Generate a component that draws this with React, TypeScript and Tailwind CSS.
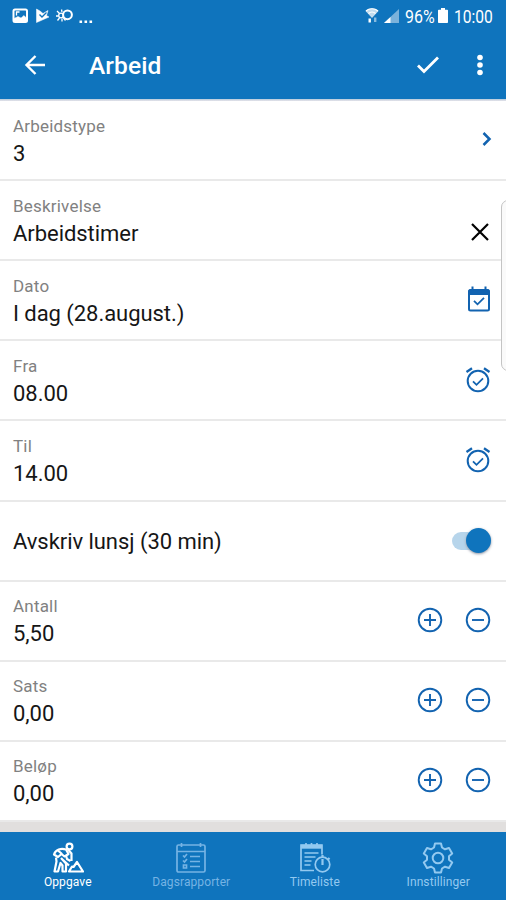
import React from "react";

const StatusBar = () => {
  return (
    <div className="flex h-8 items-center text-white">
      <svg className="ml-[12px] h-8 w-[90px]" viewBox="12 0 90 32" fill="none" stroke="currentColor">
        <rect x={13.5} y={9.5} width={13.5} height={12.5} rx={1.5} strokeWidth={2} />
        <path d="M14 21.5v-3l4-2 3 1.5 3-2.5 3 3v3z" fill="currentColor" strokeWidth={0.5} />
        <path d="M16.5 15.5v-3.5h3" strokeWidth={1.3} />
        <path d="M36.5 9l3.5 2 3 2.5 5-3-1.5 5 2.5 1.5-12.5 5.5z" fill="currentColor" strokeWidth={0.5} />
        <path d="M39.5 14.5l2.5 2.5 4.5-4.5" stroke="#0f74bd" strokeWidth={1.4} />
        <circle cx={67.5} cy={14.8} r={4.4} strokeWidth={2} />
        <circle cx={61} cy={15.5} r={2.3} strokeWidth={1.3} />
        <path d="M57 11l2.5 2.5M56 16h2.5M57.5 20.5l2-2.5M62 21.5v-3M61.5 9.5l.5 2.500M65.500 20.500l-2-2.500" strokeWidth={1.3} />
        <path d="M79.5 21.7h2.6M84.5 21.7h2.6M89.5 21.7h2.6" strokeWidth={2.4} />
      </svg>
      <svg className="ml-auto h-8 w-[38px]" viewBox="363 0 38 32" fill="currentColor">
        <path d="M365.5 11c3.500-3.600 9.500-3.600 13 0l-6.500 7z" opacity={0.75} />
        <path d="M366 11c3.300-3 8.700-3 12 0M368.500 13.500c2-1.800 5-1.800 7 0" fill="none" stroke="currentColor" strokeWidth={1.2} />
        <path d="M368.500 18.500h2.400v4h-2.400z" />
        <path d="M374 17.500h2.400v4.500h-2.400z" opacity={0.5} />
        <path d="M399 9v14h-15z" opacity={0.45} />
        <path d="M390.500 17v6h-6.500z" />
      </svg>
      <span className="ml-[4px] w-[32px] pt-px">
        <span className="inline-block origin-left scale-x-[.84] text-[19px] leading-8">96%</span>
      </span>
      <svg className="h-8 w-[12px]" viewBox="437 0 12 32" fill="currentColor">
        <path d="M441 8h4v1.800h2.200q.8 0 .8.8v11.600q0 .8-.8.800h-8.400q-.8 0-.8-.8v-11.600q0-.8.800-.8h2.200z" />
      </svg>
      <span className="ml-[5px] w-[52px] pt-px">
        <span className="inline-block origin-left scale-x-[.82] text-[19px] leading-8">10:00</span>
      </span>
    </div>
  );
};

const Header = () => {
  return (
    <header className="h-[99px] shrink-0 bg-[#0f74bd] text-white">
      <StatusBar />
      <div className="flex h-[66px] items-center pl-[24px] pr-[22px]">
        <svg className="h-[22px] w-[22px]" viewBox="0 0 22 22" fill="none" stroke="currentColor" strokeWidth={2.4}>
          <path d="M21 11H2.5M11.5 2L2.5 11l9 9" />
        </svg>
        <h1 className="ml-[43px] pt-[2px] text-[24.5px] font-medium tracking-[.1px]">Arbeid</h1>
        <svg className="ml-auto h-[20px] w-[24px]" viewBox="0 0 24 20" fill="none" stroke="currentColor" strokeWidth={2.8}>
          <path d="M2 10.5l6 6L22 2.5" />
        </svg>
        <svg className="ml-[36px] h-[22px] w-[8px]" viewBox="0 0 8 22" fill="currentColor">
          <circle cx={4} cy={3.5} r={2.8} />
          <circle cx={4} cy={11} r={2.8} />
          <circle cx={4} cy={18.5} r={2.8} />
        </svg>
      </div>
    </header>
  );
};

const ChevronIcon = () => (
  <svg className="mr-[1px] mb-[2px] h-[16px] w-[10px]" viewBox="0 0 10 16" fill="none" stroke="currentColor" strokeWidth={2.5}>
    <path d="M1.5 2l6 6-6 6" />
  </svg>
);

const CloseIcon = () => (
  <svg className="mt-[23px] mr-[4px] h-[18px] w-[18px] text-black" viewBox="0 0 18 18" fill="none" stroke="currentColor" strokeWidth={2.2}>
    <path d="M1 1l16 16M17 1L1 17" />
  </svg>
);

const CalendarIcon = () => (
  <svg className="mr-[2px] mb-[2px] h-[26px] w-[24px]" viewBox="0 0 24 26" fill="none" stroke="currentColor">
    <rect x={2} y={4} width={20} height={20.5} rx={1.5} strokeWidth={2} />
    <path d="M2 4h20v4.5H2z" fill="currentColor" strokeWidth={1} />
    <path d="M5.5.5v4M18.5.5v4" strokeWidth={2} />
    <path d="M7 14.8l3.500 3.500 6.500-6.500" strokeWidth={1.8} />
  </svg>
);

const AlarmIcon = () => (
  <svg className="mr-[2px] h-[26px] w-[26px]" viewBox="0 0 26 26" fill="none" stroke="currentColor">
    <circle cx={13} cy={14} r={10.3} strokeWidth={2} />
    <path d="M1.5 5l5.500-3.700M24.500 5l-5.500-3.700" strokeWidth={2.3} />
    <path d="M8 14.300l3.500 3.500 6.500-6.500" strokeWidth={1.8} />
  </svg>
);

const Stepper = () => (
  <div className="mr-[2px] mb-[1px] flex gap-[22px]">
    <svg className="h-[26px] w-[26px]" viewBox="0 0 26 26" fill="none" stroke="currentColor" strokeWidth={1.9}>
      <circle cx={13} cy={13} r={11.3} />
      <path d="M13 7v12M7 13h12" />
    </svg>
    <svg className="h-[26px] w-[26px]" viewBox="0 0 26 26" fill="none" stroke="currentColor" strokeWidth={1.9}>
      <circle cx={13} cy={13} r={11.3} />
      <path d="M7 13h12" />
    </svg>
  </div>
);

const Toggle = () => (
  <div className="mr-[2px] flex h-[18px] w-[39px] items-center justify-end rounded-full bg-gradient-to-r from-[#b7d5eb] from-85% to-transparent to-85%">
    <div className="h-[25px] w-[25px] shrink-0 rounded-full bg-[#0f74bd] shadow-sm shadow-gray-400" />
  </div>
);

type RowProps = {
  label?: string;
  value: string;
  children: React.ReactNode;
};

const Row = ({ label, value, children }: RowProps) => {
  return (
    <div className="flex flex-1 items-center justify-between border-b-2 border-[#e9e9e9] px-[13px] text-[#1263b0]">
      <div className={label ? "pt-[5px]" : "pt-[2px]"}>
        {label && (
          <p className="text-[17px] leading-[21px] tracking-[.2px] text-[#818181]">{label}</p>
        )}
        <p className="text-[22px] leading-[33px] tracking-[-.05px] text-[#161616]">{value}</p>
      </div>
      {children}
    </div>
  );
};

const TaskIcon = () => (
  <svg className="h-[32px] w-[32px]" viewBox="0 0 32 32" fill="none" stroke="currentColor" strokeWidth={2.2} strokeLinejoin="round">
    <circle cx={17.5} cy={4.5} r={2.9} />
    <path d="M14 7.500C9 6 3.500 7.500 2 12.500l4 2.500 3.500-3 3 2.500 4-2.500z" />
    <path d="M6 8.500l4 3.500M16 7.500l3.500 4v7.500M4 15.500l.5 4L2.500 29.500H6l2.500-8.500 2 2.500v6H14v-8l-5-5.500M14 13.500l1 3.500 3.500 2M11 18l6 5.500" />
    <path d="M17 29.500l3-5 1.500.5 3.500-5 6 9.500z" />
  </svg>
);

const ReportIcon = () => (
  <svg className="h-[32px] w-[32px]" viewBox="0 0 32 32" fill="none" stroke="currentColor" strokeWidth={1.7}>
    <rect x={2} y={3} width={28} height={27} rx={1.5} />
    <path d="M2 9.5h28M6.5 1v4M25.5 1v4" />
    <path d="M15 14.5h10M15 19.5h10M15 24.5h10" />
    <path d="M8 13.5l1.500 1.500 2.500-3M8 18.500l1.500 1.500 2.500-3M8.500 23h3v3h-3z" />
  </svg>
);

const TimesheetIcon = () => (
  <svg className="h-[32px] w-[32px]" viewBox="0 0 32 32" fill="none" stroke="currentColor" strokeWidth={1.7}>
    <path d="M15 28.500H2V3h21v9.500" />
    <path d="M2 4.700h21" strokeWidth={4} />
    <path d="M7 1v3M12.500 1v3M18 1v3M5.500 11h14M5.500 15h11M5.500 19h7M5.500 23h6" />
    <circle cx={23.5} cy={22.5} r={7.3} />
    <path d="M23.500 23v-6M23.500 15v-2M29 16l1.500 1.500" strokeWidth={2.2} />
  </svg>
);

const SettingsIcon = () => (
  <svg className="h-[32px] w-[32px]" viewBox="0 0 32 32" fill="none" stroke="currentColor" strokeWidth={2} strokeLinejoin="round">
    <path d="M13 1.500h6l1 4 3 1.800 4-1.300 3.200 5.500-3.200 2.800v3.400l3.200 2.800-3.200 5.500-4-1.300-3 1.800-1 4h-6l-1-4-3-1.800-4 1.300-3.200-5.500 3.200-2.800v-3.400l-3.200-2.800L5 6l4 1.300 3-1.800z" />
    <circle cx={16} cy={16} r={5.3} />
  </svg>
);

const tabs = [
  { name: "Oppgave", icon: <TaskIcon />, color: "text-white" },
  { name: "Dagsrapporter", icon: <ReportIcon />, color: "text-[#75b3e4]" },
  { name: "Timeliste", icon: <TimesheetIcon />, color: "text-[#93c9f0]" },
  { name: "Innstillinger", icon: <SettingsIcon />, color: "text-[#93c9f0]" },
];

const App = () => {
  return (
    <div className="relative flex h-[900px] w-[506px] flex-col overflow-hidden bg-white font-['Roboto',sans-serif]">
      <Header />
      <div className="h-[2px] shrink-0 bg-gradient-to-b from-[#b3c9db] to-[#e8e4ea]" />
      <main className="flex flex-1 flex-col">
        <Row label="Arbeidstype" value="3">
          <ChevronIcon />
        </Row>
        <Row label="Beskrivelse" value="Arbeidstimer">
          <CloseIcon />
        </Row>
        <Row label="Dato" value="I dag (28.august.)">
          <CalendarIcon />
        </Row>
        <Row label="Fra" value="08.00">
          <AlarmIcon />
        </Row>
        <Row label="Til" value="14.00">
          <AlarmIcon />
        </Row>
        <Row value="Avskriv lunsj (30 min)">
          <Toggle />
        </Row>
        <Row label="Antall" value="5,50">
          <Stepper />
        </Row>
        <Row label="Sats" value="0,00">
          <Stepper />
        </Row>
        <Row label="Beløp" value="0,00">
          <Stepper />
        </Row>
      </main>
      <div className="h-[10px] shrink-0 bg-[#e1dfde]" />
      <nav className="flex h-[68px] shrink-0 bg-[#0f74bd] px-[6px]">
        {tabs.map((tab) => (
          <div key={tab.name} className={`flex flex-1 flex-col items-center pt-[10px] ${tab.color}`}>
            {tab.icon}
            <span className="text-[12px] leading-[16px] tracking-[.1px]">{tab.name}</span>
          </div>
        ))}
      </nav>
      {/* edge panel handle */}
      <div className="absolute top-[200px] -right-[10px] h-[171px] w-[15px] rounded-[7px] border border-[#c4c4c4] bg-[#fafafa]" />
    </div>
  );
};

export default App;
